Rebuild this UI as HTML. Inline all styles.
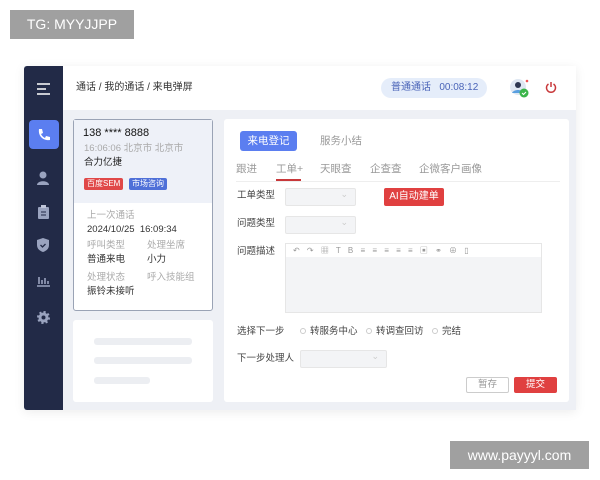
<!DOCTYPE html>
<html><head><meta charset="utf-8"><style>
*{margin:0;padding:0;box-sizing:border-box}
body{width:600px;height:480px;background:#fff;position:relative;overflow:hidden;font-family:"Liberation Sans","Noto Sans CJK SC",sans-serif;font-size:9.5px;color:#333}
.a{position:absolute;line-height:1.2}
.wm{background:#a0a0a0;color:#fff;font-size:14px;display:flex;align-items:center;justify-content:center}
.frame{left:24px;top:66px;width:552px;height:344px;background:#eef0f5;box-shadow:0 2px 10px rgba(0,0,0,.08)}
.side{left:24px;top:66px;width:39px;height:344px;background:#222a47;border-radius:3px 0 0 3px}
.hdr{left:63px;top:66px;width:513px;height:44px;background:#fff}
.card{background:#fff;border-radius:3px}
.gray{color:#aaa}
.tag{display:inline-block;color:#fff;font-size:8px;padding:1px 3px;border-radius:2px}
.sel{background:#f3f4f6;border:1px solid #e6e6e6;border-radius:2px}
.sel:after{content:"⌄";position:absolute;right:7px;top:0;color:#ccc;font-size:9px}
.lab{font-size:9.5px;color:#444}
.rad{display:inline-block;width:6px;height:6px;border:1px solid #ccc;border-radius:50%;margin-right:4px;vertical-align:0}
.ic{fill:#9aa3bf}
</style></head><body>
<div class="a wm" style="left:10px;top:10px;width:124px;height:29px">TG: MYYJJPP</div>
<div class="a wm" style="left:450px;top:441px;width:139px;height:28px">www.payyyl.com</div>

<div class="a frame"></div>
<div class="a side"></div>
<svg class="a" style="left:36px;top:82px" width="16" height="14"><path d="M1 2h13M1 7h9M1 12h13" stroke="#fff" stroke-width="1.6"/></svg>
<div class="a" style="left:29px;top:120px;width:30px;height:29px;background:#5b7ef0;border-radius:4px"></div>
<svg class="a" style="left:36px;top:127px" width="16" height="16" viewBox="0 0 16 16"><path d="M3 2l3 0 1 4-2 1c1 2 2 3 4 4l1-2 4 1 0 3c-7 1-12-4-11-11z" fill="#fff"/></svg>
<svg class="a" style="left:37px;top:171px" width="12" height="14"><circle cx="6" cy="4" r="3.5" class="ic"/><path d="M0 14c0-5 12-5 12 0z" class="ic"/></svg>
<svg class="a" style="left:38px;top:205px" width="11" height="14"><rect x="0" y="2" width="11" height="12" rx="1" class="ic"/><rect x="3" y="0" width="5" height="3" fill="#c0c6da"/><path d="M3 7h5M3 10h5" stroke="#222a47"/></svg>
<svg class="a" style="left:37px;top:238px" width="12" height="14"><path d="M6 0l6 2v5c0 4-3 6-6 7-3-1-6-3-6-7V2z" class="ic"/><path d="M3.5 7l2 2 3-3" stroke="#222a47" fill="none" stroke-width="1.3"/></svg>
<svg class="a" style="left:37px;top:274px" width="13" height="13"><path d="M2 3v7M5 6v4M8 4v6M11 7v3M0 12h13" stroke="#9aa3bf" stroke-width="1.6"/></svg>
<svg class="a" style="left:36px;top:310px" width="15" height="15" viewBox="0 0 15 15"><circle cx="7.5" cy="7.5" r="5" class="ic" stroke="#9aa3bf" stroke-width="3" stroke-dasharray="2 1.9"/><circle cx="7.5" cy="7.5" r="2" fill="#222a47"/></svg>

<div class="a hdr"></div>
<div class="a" style="left:76px;top:82px;font-size:10px;color:#333">通话 / 我的通话 / 来电弹屏</div>
<div class="a" style="left:381px;top:78px;width:106px;height:20px;background:#e5edfa;border-radius:10px;color:#4a64b8;font-size:10px;line-height:20px;padding-left:10px">普通通话 &nbsp; 00:08:12</div>
<svg class="a" style="left:508px;top:77px" width="24" height="22"><circle cx="10" cy="10" r="8" fill="#dfe7f2"/><circle cx="10" cy="8" r="3" fill="#2c3550"/><path d="M4 16c2-4 10-4 12 0" fill="#5aa0e0"/><circle cx="16" cy="16" r="4.5" fill="#3bb54a"/><path d="M14 16l1.5 1.5 2.5-2.5" stroke="#fff" fill="none"/><circle cx="19" cy="4" r="1.3" fill="#e55"/></svg>
<svg class="a" style="left:545px;top:81px" width="12" height="12"><path d="M3.5 3a4.5 4.5 0 1 0 5 0" stroke="#c8383a" stroke-width="1.5" fill="none"/><path d="M6 1v5" stroke="#c8383a" stroke-width="1.5"/></svg>

<div class="a card" style="left:73px;top:119px;width:140px;height:192px;border:1px solid #9aa3b5"></div>
<div class="a" style="left:74px;top:120px;width:138px;height:83px;background:#eef1f8"></div>
<div class="a" style="left:83px;top:127px;font-size:11px;color:#111">138 **** 8888</div>
<div class="a gray" style="left:84px;top:143px">16:06:06 北京市 北京市</div>
<div class="a" style="left:84px;top:157px;color:#222">合力亿捷</div>
<div class="a tag" style="left:84px;top:178px;background:#e04848">百度SEM</div>
<div class="a tag" style="left:129px;top:178px;background:#4f70d8">市场咨询</div>
<div class="a gray" style="left:87px;top:210px">上一次通话</div>
<div class="a" style="left:87px;top:224px">2024/10/25 &nbsp;16:09:34</div>
<div class="a gray" style="left:87px;top:240px">呼叫类型</div>
<div class="a gray" style="left:147px;top:240px">处理坐席</div>
<div class="a" style="left:87px;top:254px">普通来电</div>
<div class="a" style="left:147px;top:254px">小力</div>
<div class="a gray" style="left:87px;top:272px">处理状态</div>
<div class="a gray" style="left:147px;top:272px">呼入技能组</div>
<div class="a" style="left:87px;top:286px">振铃未接听</div>

<div class="a card" style="left:73px;top:320px;width:140px;height:82px"></div>
<div class="a" style="left:94px;top:338px;width:98px;height:7px;background:#eceef2;border-radius:3px"></div>
<div class="a" style="left:94px;top:357px;width:98px;height:7px;background:#eceef2;border-radius:3px"></div>
<div class="a" style="left:94px;top:377px;width:56px;height:7px;background:#eceef2;border-radius:3px"></div>

<div class="a card" style="left:224px;top:119px;width:345px;height:283px"></div>
<div class="a" style="left:240px;top:131px;width:57px;height:20px;background:#5b7ef0;border-radius:3px;color:#fff;font-size:10.5px;text-align:center;line-height:20px">来电登记</div>
<div class="a" style="left:320px;top:135px;font-size:10.5px;color:#999">服务小结</div>
<div class="a" style="left:236px;top:163px;font-size:10.5px;color:#999">跟进</div>
<div class="a" style="left:276px;top:163px;font-size:10.5px;color:#999">工单+</div>
<div class="a" style="left:276px;top:179px;width:25px;height:2px;background:#c8383a"></div>
<div class="a" style="left:320px;top:163px;font-size:10.5px;color:#999">天眼查</div>
<div class="a" style="left:370px;top:163px;font-size:10.5px;color:#999">企查查</div>
<div class="a" style="left:419px;top:163px;font-size:10.5px;color:#999">企微客户画像</div>
<div class="a" style="left:236px;top:181px;width:324px;height:1px;background:#eee"></div>

<div class="a lab" style="left:237px;top:190px">工单类型</div>
<div class="a sel" style="left:285px;top:188px;width:71px;height:18px"></div>
<div class="a" style="left:384px;top:188px;width:60px;height:18px;background:#e04040;border-radius:2px;color:#fff;font-size:10px;text-align:center;line-height:18px">AI自动建单</div>
<div class="a lab" style="left:237px;top:218px">问题类型</div>
<div class="a sel" style="left:285px;top:216px;width:71px;height:18px"></div>
<div class="a lab" style="left:237px;top:246px">问题描述</div>
<div class="a" style="left:285px;top:243px;width:257px;height:70px;border:1px solid #e6e6e6;background:#f3f4f6"></div>
<div class="a" style="left:286px;top:244px;width:255px;height:13px;background:#fff;color:#999;font-size:8px;line-height:13px;padding-left:7px;word-spacing:5px;white-space:nowrap">↶ ↷ ▦ T B ≡ ≡ ≡ ≡ ≡ ▣ ⚭ ⊕ ▯</div>

<div class="a lab" style="left:237px;top:326px">选择下一步</div>
<div class="a lab" style="left:300px;top:326px"><span class="rad"></span>转服务中心</div>
<div class="a lab" style="left:366px;top:326px"><span class="rad"></span>转调查回访</div>
<div class="a lab" style="left:432px;top:326px"><span class="rad"></span>完结</div>
<div class="a lab" style="left:237px;top:353px">下一步处理人</div>
<div class="a sel" style="left:300px;top:350px;width:87px;height:18px"></div>
<div class="a" style="left:466px;top:377px;width:43px;height:16px;border:1px solid #ccc;border-radius:2px;color:#999;text-align:center;line-height:14px;font-size:9.5px">暂存</div>
<div class="a" style="left:514px;top:377px;width:43px;height:16px;background:#e04040;border-radius:2px;color:#fff;text-align:center;line-height:16px;font-size:9.5px">提交</div>
</body></html>
